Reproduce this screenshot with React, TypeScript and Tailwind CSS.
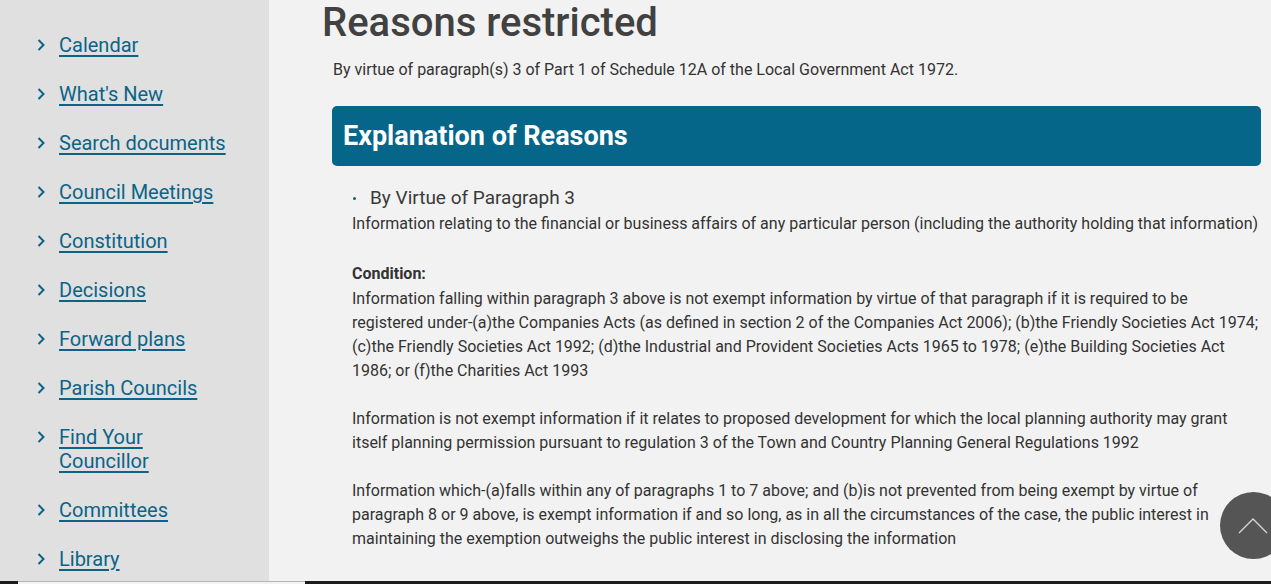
import React from "react";

const links: string[][] = [
  ["Calendar"],
  ["What's New"],
  ["Search documents"],
  ["Council Meetings"],
  ["Constitution"],
  ["Decisions"],
  ["Forward plans"],
  ["Parish Councils"],
  ["Find Your", "Councillor"],
  ["Committees"],
  ["Library"],
];

function Chevron() {
  return (
    <svg width="10" height="14" viewBox="0 0 10 14" className="shrink-0 mt-[5px]">
      <path d="M2.5 2 L7.5 7 L2.5 12" fill="none" stroke="#0b6385" strokeWidth="2" />
    </svg>
  );
}

export default function App() {
  return (
    <div className="w-[1271px] h-[584px] overflow-hidden flex flex-col bg-[#f2f2f2]" style={{ fontFamily: "Roboto, 'Liberation Sans', sans-serif" }}>
      <div className="flex h-[581px] overflow-hidden relative">
        <aside className="w-[269px] shrink-0 bg-[#e0e0e0] pl-[36px] pt-[33px]">
          <ul className="flex flex-col gap-[25px]">
            {links.map((l, i) => (
              <li key={i} className="flex gap-[13px] items-start">
                <Chevron />
                <a className="text-[20px] leading-[24px] text-[#0b6487] underline underline-offset-[3px] decoration-[2px]" href="#">
                  {l.length > 1 ? (
                    <>
                      {l[0]}
                      <br />
                      {l[1]}
                    </>
                  ) : (
                    l[0]
                  )}
                </a>
              </li>
            ))}
          </ul>
        </aside>
        <main className="flex-1 pl-[63px] pr-[10px]">
          <h1 className="-ml-[10px] text-[40px] leading-[44px] font-medium text-[#414141] mt-[1px]">Reasons restricted</h1>
          <p className="mt-[14px] text-[16px] leading-[22px] text-[#333] pl-[1px]">
            By virtue of paragraph(s) 3 of Part 1 of Schedule 12A of the Local Government Act 1972.
          </p>
          <div className="mt-[25px] h-[60px] rounded-[5px] bg-[#06668a] flex items-center pl-[11px]">
            <h2 className="text-[27px] font-bold text-white leading-none">Explanation of Reasons</h2>
          </div>
          <div className="pl-[20px] pt-[21px] text-[#333]">
            <div className="flex items-center text-[19px] leading-[22px]">
              <span className="w-[18px] flex items-center">
                <span className="block w-[3px] h-[3px] rounded-full bg-[#0b6487] ml-[1px]" />
              </span>
              <span className="text-[#3a3a3a]">By Virtue of Paragraph 3</span>
            </div>
            <div className="text-[16px] leading-[24px] mt-[3px]">
              <p>Information relating to the financial or business affairs of any particular person (including the authority holding that information)</p>
              <p className="mt-[24px] text-[16px] leading-[27px] font-bold">Condition:</p>
              <p>
                Information falling within paragraph 3 above is not exempt information by virtue of that paragraph if it is required to be registered under-(a)the Companies Acts (as defined in section 2 of the Companies Act 2006); (b)the Friendly Societies Act 1974; (c)the Friendly Societies Act 1992; (d)the Industrial and Provident Societies Acts 1965 to 1978; (e)the Building Societies Act 1986; or (f)the Charities Act 1993
              </p>
              <p className="mt-[24px] pr-[20px]">
                Information is not exempt information if it relates to proposed development for which the local planning authority may grant itself planning permission pursuant to regulation 3 of the Town and Country Planning General Regulations 1992
              </p>
              <p className="mt-[24px] pr-[50px]">
                Information which-(a)falls within any of paragraphs 1 to 7 above; and (b)is not prevented from being exempt by virtue of paragraph 8 or 9 above, is exempt information if and so long, as in all the circumstances of the case, the public interest in maintaining the exemption outweighs the public interest in disclosing the information
              </p>
            </div>
          </div>
        </main>
        <button className="absolute left-[1220px] top-[492px] w-[67px] h-[67px] rounded-full bg-[#555555] flex items-center justify-center">
          <svg width="30" height="18" viewBox="0 0 30 18" className="-ml-[2px]">
            <path d="M1 16 L15 2 L29 16" fill="none" stroke="#d8d8d8" strokeWidth="1.3" />
          </svg>
        </button>
      </div>
      <div className="h-[3px] flex bg-[#1c1c1c]">
        <div className="w-[18px]" />
        <div className="w-[287px] bg-[#f3f3f3] border-t border-[#b5b5b5]" />
        <div className="flex-1" />
      </div>
    </div>
  );
}
